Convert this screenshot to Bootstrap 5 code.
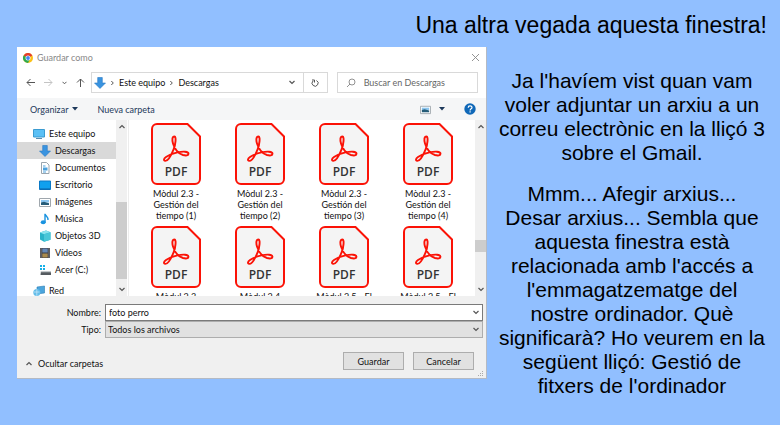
<!DOCTYPE html>
<html lang="ca">
<head>
<meta charset="utf-8">
<meta name="viewport" content="width=device-width, initial-scale=1">
<title>Una altra vegada aquesta finestra!</title>
<link href="https://cdn.jsdelivr.net/npm/bootstrap@5.3.0/dist/css/bootstrap.min.css" rel="stylesheet">
<style>
body{background:#91bfff;color:#000;font-family:"Liberation Sans",Arial,sans-serif}
.slide{padding:9px 13px 12px 17px}
.slide-title{font-size:23px;line-height:32px;margin:0 0 6px}
.slide-grid{display:grid;grid-template-columns:minmax(0,470fr) minmax(0,270fr);column-gap:10px}
.slide-text{font-size:21px;line-height:24px;padding-top:22px}
.slide-text p{margin:0 0 17px}
.dialog{font-family:Lato,"Open Sans",sans-serif;font-size:9px;line-height:11px;background:#fff;color:#111;border-right:1px solid #b4bac4;border-bottom:1px solid #b4bac4;align-self:start}
.dialog svg{display:block;flex:none}
.dialog button{font:inherit;color:inherit;background:none;border:0;padding:0}
.titlebar{height:21px;padding:0 6px 0 6px;color:#888}
.nav-row{height:30px;padding:4px 8px 5px 9px}
.nav-icons{width:65px;padding-right:6px}
.box{border:1px solid #d9d9d9;height:21px}
.address{flex:237 1 0;min-width:0;padding-left:2px}
.crumbs{gap:5px}
.search{flex:142 1 0;min-width:0;margin-left:9px}
.search input{border:0;padding:0;min-width:0;width:100%;font:inherit;outline:0;color:#555}
.search input::placeholder{color:#666;opacity:1}
.dialog .refresh{border-left:1px solid #d9d9d9;width:24px;height:19px}
.toolbar-row{height:22px;background:#f5f6f7;color:#1e395b;padding:0 10px 0 13px;gap:19px}
.browser{height:176px}
.tree{width:99px;padding-top:5px}
.tree-row{height:17px;padding-left:22px;gap:4px;color:#111;text-decoration:none;white-space:nowrap}
.tree-row.top-level{padding-left:16px}
.tree-row.chosen{background:#d9d9d9}
.tree-row.network{margin-top:4px}
.scroller{width:11px;background:#f0f0f0;padding:4px 0}
.thumb{background:#cdcdcd}
.thumb-tree{height:77px;margin-bottom:8px}
.thumb-files{height:12px;margin-bottom:35px}
.split{width:2px;border-right:1px solid #ececec}
.files{display:grid;grid-template-columns:repeat(4,minmax(0,1fr));grid-auto-rows:103px;padding:3px 5px 0 5px;align-content:start}
.file-item{text-align:center}
.file-item svg{margin:0 auto 3px}
.form-area{background:#f0f0f0;padding:8px 3px 0 0}
.field-row{display:grid;grid-template-columns:84px minmax(0,1fr);column-gap:4px;align-items:center;text-align:right}
.field{position:relative}
.field svg{position:absolute;right:4px;top:6px;pointer-events:none}
.field input,.field select{display:block;width:100%;height:17px;border:1px solid #7a7a7a;background:#fff;font:inherit;color:#111;padding:0 3px;border-radius:0;appearance:none}
.field select{background:#e1e1e1;border-color:#adadad;padding:0 2px}
.actions{padding:14px 9px 8px 9px;gap:9px}
.dialog .fold{gap:6px;padding-top:4px}
.dialog .push{width:61px;height:18px;background:#e1e1e1;border:1px solid #adadad}
.grip{position:absolute;right:2px;bottom:1px}
</style>
</head>
<body>
<svg width="0" height="0" class="position-absolute">
<defs>
<symbol id="pdf" viewBox="0 0 50 62"><path d="M6 1H36.500L49 13.500V56a5 5 0 0 1-5 5H6a5 5 0 0 1-5-5V6a5 5 0 0 1 5-5z" fill="#f4f4f4" stroke="#fb1206" stroke-width="2"/><path d="M23.500 13.500c-2.500 0-2.500 3.500-1.500 7 1.500 5 5 10 10 11.500 3 .8 5.500.5 5.500-1.200 0-2.500-5.500-2.600-11-1.400-4 .8-8.500 2.600-11.500 4.600-2.500 1.600-2.500 3.700-.8 3.900 3 .3 6.300-6.300 8.500-11.800 1.800-4.500 2.800-12.600.8-12.600z" fill="none" stroke="#fb1206" stroke-width="1.900"/><text x="25" y="53" text-anchor="middle" font-family="Open Sans,Noto Sans,sans-serif" font-size="12" font-weight="600" fill="#333">PDF</text></symbol>
<symbol id="chev" viewBox="0 0 6 5"><path d="M.5 1 3 3.500 5.500 1" fill="none" stroke="#555" stroke-width="1.200"/></symbol>
<symbol id="chevup" viewBox="0 0 6 5"><path d="M.5 4 3 1.500 5.500 4" fill="none" stroke="#555" stroke-width="1.200"/></symbol>
<symbol id="down" viewBox="0 0 12 12"><path d="M3.700.5h4.600V6h3.200L6 11.500.5 6h3.200z" fill="#3a94e0" stroke="#2878c4" stroke-width=".6"/></symbol>
<symbol id="pic" viewBox="0 0 12 12"><path d="M.5 2.500h11v8H.5z" fill="#fff" stroke="#a0a7ad"/><path d="M2 4h8v2.500H2z" fill="#8cc6f0"/><path d="M2 6.500l3-.8 5 1.500V9H2z" fill="#255c78"/></symbol>
</defs>
</svg>
<main class="slide">
<h1 class="slide-title text-end fw-normal">Una altra vegada aquesta finestra!</h1>
<div class="slide-grid">
<section class="dialog" aria-label="Guardar como">
<header class="titlebar d-flex align-items-center gap-1">
<svg width="10" height="10" viewBox="0 0 20 20"><circle cx="10" cy="10" r="10" fill="#fbc116"/><path d="M10 10 1.300 5A10 10 0 0 1 18.700 5z" fill="#e33b2e"/><path d="M10 10 1.300 5A10 10 0 0 0 10 20l4-8z" fill="#2da94f"/><circle cx="10" cy="10" r="5" fill="#fff"/><circle cx="10" cy="10" r="3.800" fill="#4285f4"/></svg>
<span>Guardar como</span>
<button type="button" class="ms-auto" aria-label="Cerrar"><svg width="9" height="9" viewBox="0 0 9 9"><path d="M1 1l7 7M8 1 1 8" stroke="#888" stroke-width=".9"/></svg></button>
</header>
<nav class="nav-row d-flex align-items-center">
<div class="nav-icons d-flex align-items-center justify-content-between">
<button type="button" aria-label="Atrás"><svg width="9" height="9" viewBox="0 0 9 9"><path d="M9 4.500H1M4.500 1 1 4.500 4.500 8" fill="none" stroke="#555"/></svg></button>
<button type="button" aria-label="Adelante"><svg width="9" height="9" viewBox="0 0 9 9"><path d="M0 4.500h8M4.500 1 8 4.500 4.500 8" fill="none" stroke="#c4c4c4"/></svg></button>
<button type="button" aria-label="Recientes"><svg width="5" height="4"><use href="#chev"/></svg></button>
<button type="button" aria-label="Subir"><svg width="9" height="9" viewBox="0 0 9 9"><path d="M4.500 9V1M1 4.500 4.500 1 8 4.500" fill="none" stroke="#555"/></svg></button>
</div>
<div class="address box d-flex align-items-center">
<div class="crumbs d-flex align-items-center">
<svg width="12" height="12"><use href="#down"/></svg>
<svg width="3" height="6" viewBox="0 0 3 6"><path d="M.3 1l2 2-2 2" fill="none" stroke="#555"/></svg>
<span>Este equipo</span>
<svg width="3" height="6" viewBox="0 0 3 6"><path d="M.3 1l2 2-2 2" fill="none" stroke="#555"/></svg>
<span>Descargas</span>
</div>
<button type="button" class="ms-auto me-2" aria-label="Ubicaciones"><svg width="6" height="5"><use href="#chev"/></svg></button>
<button type="button" class="refresh d-flex align-items-center justify-content-center" aria-label="Actualizar"><svg width="8" height="8" viewBox="0 0 8 8"><path d="M5.500 1.500A3 3 0 1 1 2 2M1 1h2.500v2.500" fill="none" stroke="#555"/></svg></button>
</div>
<label class="search box d-flex align-items-center">
<svg class="mx-2" width="10" height="10" viewBox="0 0 10 10"><circle cx="6" cy="4" r="3" fill="none" stroke="#777" stroke-width=".8"/><path d="M4 6 1 9" stroke="#777" stroke-width=".8"/></svg>
<input type="text" placeholder="Buscar en Descargas" aria-label="Buscar en Descargas">
</label>
</nav>
<div class="toolbar-row d-flex align-items-center">
<button type="button" class="d-flex align-items-center gap-1">Organizar <svg width="6" height="4" viewBox="0 0 6 4"><path d="M0 0h6L3 3.500z" fill="#1e395b"/></svg></button>
<button type="button">Nueva carpeta</button>
<button type="button" class="ms-auto d-flex align-items-center gap-2" aria-label="Vista"><svg width="11" height="11"><use href="#pic"/></svg><svg width="6" height="4" viewBox="0 0 6 4"><path d="M0 0h6L3 3.500z" fill="#1e395b"/></svg></button>
<button type="button" aria-label="Ayuda"><svg width="12" height="12" viewBox="0 0 12 12"><circle cx="6" cy="6" r="5.700" fill="#0f68b8"/><path d="M4.200 4.700C4.200 2.300 8 2.400 8 4.500 8 5.800 6.100 5.700 6.100 7.400M6.100 8.300v1.300" fill="none" stroke="#fff" stroke-width="1.200"/></svg></button>
</div>
<div class="browser d-flex overflow-hidden">
<div class="tree flex-shrink-0">
<a href="#" class="tree-row top-level d-flex align-items-center"><svg width="12" height="12" viewBox="0 0 12 12"><path d="M.5 1.500h11v7.500H.5z" fill="#5bc0f5" stroke="#3b9bd0"/><path d="M3 10.500h6" stroke="#5a8db0"/></svg>Este equipo</a>
<a href="#" class="tree-row chosen d-flex align-items-center"><svg width="12" height="12"><use href="#down"/></svg>Descargas</a>
<a href="#" class="tree-row d-flex align-items-center"><svg width="12" height="12" viewBox="0 0 12 12"><path d="M2.500.5h5L10 3v8.500H2.500z" fill="#fff" stroke="#9aa5ad"/><path d="M4 4h2.500M4 10h3" stroke="#4aa0dc"/><path d="M4 5.500h4.500v3H4z" fill="#4aa0dc"/></svg>Documentos</a>
<a href="#" class="tree-row d-flex align-items-center"><svg width="12" height="12" viewBox="0 0 12 12"><path d="M.5 2h11v8.500H.5z" fill="#0fa0ee" stroke="#0a79c6"/><path d="M1 10h10" stroke="#0b62a4"/></svg>Escritorio</a>
<a href="#" class="tree-row d-flex align-items-center"><svg width="12" height="12"><use href="#pic"/></svg>Imágenes</a>
<a href="#" class="tree-row d-flex align-items-center"><svg width="12" height="12" viewBox="0 0 12 12"><ellipse cx="4.200" cy="9.300" rx="2.500" ry="2" fill="#1993e0"/><path d="M6 9.500V.8C6.500 3 9.500 3.500 9 7" fill="none" stroke="#1993e0" stroke-width="1.400"/></svg>Música</a>
<a href="#" class="tree-row d-flex align-items-center"><svg width="12" height="12" viewBox="0 0 12 12"><path d="M1 2.500 7 .5l4.500 1.700v7.500L5 11.800 1 9.500z" fill="#29b3c9"/><path d="M1 2.500 7 .5l4.500 1.700L5 4.200z" fill="#8be3ee"/><path d="M5 4.200l6.500-2v7.500L5 11.800z" fill="#49c7d8"/></svg>Objetos 3D</a>
<a href="#" class="tree-row d-flex align-items-center"><svg width="12" height="12" viewBox="0 0 12 12"><path d="M1 1h10v10H1z" fill="#3d3d42"/><path d="M3.300 1.500h5.400v4H3.300z" fill="#6487b5"/><path d="M3.300 6.500h5.400v4H3.300z" fill="#a98a4d"/><path d="M2 1.500v9M10 1.500v9" stroke="#ccc" stroke-width=".9" stroke-dasharray="1 1"/></svg>Vídeos</a>
<a href="#" class="tree-row d-flex align-items-center"><svg width="12" height="12" viewBox="0 0 12 12"><path d="M1 1h2v2H1zM4 1h2v2H4zM1 4h2v2H1zM4 4h2v2H4z" fill="#16b0e8"/><path d="M2 7h9l1 1.500V11H1.500z" fill="#555b60"/><path d="M2 7h9l.8 1.300H1.800z" fill="#c5c9cc"/></svg>Acer (C:)</a>
<a href="#" class="tree-row top-level network d-flex align-items-center"><svg width="12" height="12" viewBox="0 0 12 12"><path d="M4 2 11.500 1v7L4 9z" fill="#4ba5dd" stroke="#2a7db5" stroke-width=".6"/><circle cx="3.800" cy="7.500" r="3.500" fill="#64bde9"/><path d="M1 7h5.500M3.800 4.200v6.600" stroke="#cdeafa" stroke-width=".7"/></svg>Red</a>
</div>
<div class="scroller d-flex flex-column align-items-center flex-shrink-0" aria-hidden="true"><svg width="6" height="5"><use href="#chevup"/></svg><div class="thumb thumb-tree w-100 mt-auto"></div><svg width="6" height="5"><use href="#chev"/></svg></div>
<div class="split flex-shrink-0"></div>
<div class="files flex-grow-1">
<div class="file-item"><svg width="50" height="62"><use href="#pdf"/></svg>Mòdul 2.3 -<br>Gestión del<br>tiempo (1)</div>
<div class="file-item"><svg width="50" height="62"><use href="#pdf"/></svg>Mòdul 2.3 -<br>Gestión del<br>tiempo (2)</div>
<div class="file-item"><svg width="50" height="62"><use href="#pdf"/></svg>Mòdul 2.3 -<br>Gestión del<br>tiempo (3)</div>
<div class="file-item"><svg width="50" height="62"><use href="#pdf"/></svg>Mòdul 2.3 -<br>Gestión del<br>tiempo (4)</div>
<div class="file-item"><svg width="50" height="62"><use href="#pdf"/></svg>Mòdul 2.3</div>
<div class="file-item"><svg width="50" height="62"><use href="#pdf"/></svg>Mòdul 2.4</div>
<div class="file-item"><svg width="50" height="62"><use href="#pdf"/></svg>Mòdul 2.5 - El</div>
<div class="file-item"><svg width="50" height="62"><use href="#pdf"/></svg>Mòdul 2.5 - El</div>
</div>
<div class="scroller d-flex flex-column align-items-center flex-shrink-0" aria-hidden="true"><svg width="6" height="5"><use href="#chevup"/></svg><div class="thumb thumb-files w-100 mt-auto"></div><svg width="6" height="5"><use href="#chev"/></svg></div>
</div>
<form class="form-area position-relative">
<div class="field-row"><label for="name">Nombre:</label><div class="field"><input id="name" type="text" value="foto perro"><svg width="6" height="5"><use href="#chev"/></svg></div></div>
<div class="field-row"><label for="kind">Tipo:</label><div class="field"><select id="kind"><option>Todos los archivos</option></select><svg width="6" height="5"><use href="#chev"/></svg></div></div>
<div class="actions d-flex align-items-center">
<button type="button" class="fold d-flex align-items-center me-auto"><svg width="6" height="5"><use href="#chevup"/></svg>Ocultar carpetas</button>
<button type="button" class="push">Guardar</button>
<button type="button" class="push">Cancelar</button>
</div>
<svg class="grip" width="6" height="6" viewBox="0 0 6 6"><path d="M4 0h1v1H4zM4 2h1v1H4zM4 4h1v1H4zM2 2h1v1H2zM2 4h1v1H2zM0 4h1v1H0z" fill="#aaa"/></svg>
</form>
</section>
<section class="slide-text text-center">
<p>Ja l'havíem vist quan vam voler adjuntar un arxiu a un correu electrònic en la lliçó 3 sobre el Gmail.</p>
<p>Mmm... Afegir arxius... Desar arxius... Sembla que aquesta finestra està relacionada amb l'accés a l'emmagatzematge del nostre ordinador. Què significarà? Ho veurem en la següent lliçó: Gestió de fitxers de l'ordinador</p>
</section>
</div>
</main>
<script src="https://cdn.jsdelivr.net/npm/bootstrap@5.3.0/dist/js/bootstrap.bundle.min.js"></script>
</body>
</html>
